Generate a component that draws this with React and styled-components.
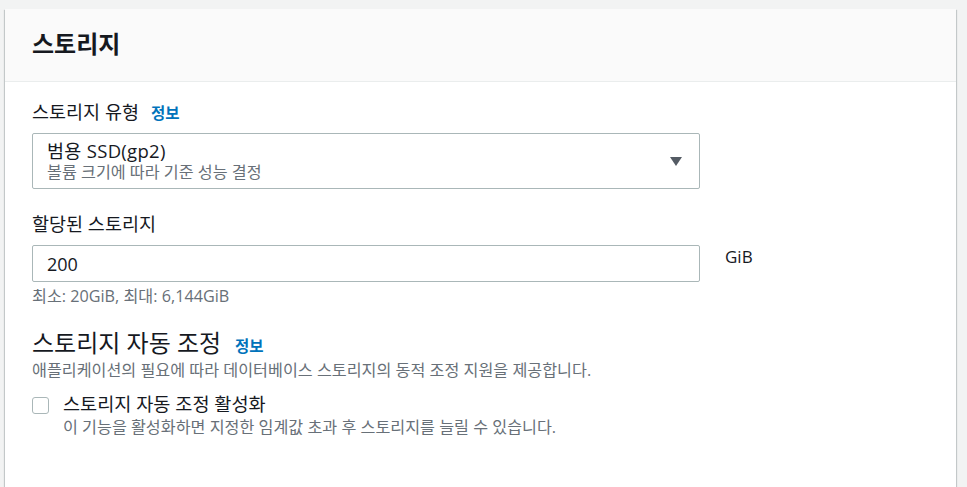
import styled, { createGlobalStyle } from "styled-components"

const GlobalStyle = createGlobalStyle`
    html, body {
        margin: 0;
        padding: 0;
        background: #f2f3f3;
    }
    body {
        font-family: "Open Sans", "Noto Sans CJK KR", sans-serif;
        color: #16191f;
    }
`

const Page = styled.div`
    padding: 9px 0 0 5px;
    width: 951px;
`

const Card = styled.section`
    background: #fff;
    box-shadow: 0 1px 1px 0 rgba(0, 28, 36, 0.3), 1px 1px 1px 0 rgba(0, 28, 36, 0.15), -1px 1px 1px 0 rgba(0, 28, 36, 0.15);
`

const Header = styled.header`
    display: flex;
    align-items: center;
    height: 72px;
    padding: 0 27px;
    background: #fafafa;
    border-bottom: 1px solid #eaeded;
`

const Title = styled.h2`
    margin: 0;
    margin-top: -3px;
    font-size: 24px;
    font-weight: 700;
    line-height: 30px;
`

const Body = styled.div`
    display: flex;
    flex-direction: column;
    padding: 18px 27px 51px;
`

const Field = styled.div`
    display: flex;
    flex-direction: column;
    margin-top: ${p => p.$top || 0}px;
`

const Label = styled.label`
    display: flex;
    align-items: baseline;
    gap: 12px;
    font-size: 18.5px;
    line-height: 24px;
    margin-bottom: ${p => p.$gap || 8}px;
`

const InfoLink = styled.a`
    color: #0073bb;
    font-size: 15.5px;
    font-weight: 700;
    text-decoration: none;
`

const Select = styled.div`
    display: flex;
    align-items: center;
    justify-content: space-between;
    box-sizing: border-box;
    width: 668px;
    height: 56px;
    padding: 0 17px 0 14px;
    border: 1px solid #aab7b8;
    border-radius: 2px;
`

const SelectText = styled.div`
    display: flex;
    flex-direction: column;
`

const Primary = styled.span`
    font-size: 18.5px;
    line-height: 22px;
    letter-spacing: 0.3px;
`

const Secondary = styled.span`
    font-size: 16.2px;
    line-height: 20px;
    color: #687078;
`

const InputRow = styled.div`
    display: flex;
    align-items: flex-start;
    gap: 25px;
`

const Input = styled.div`
    box-sizing: border-box;
    width: 668px;
    height: 37px;
    display: flex;
    align-items: center;
    padding: 0 14px;
    border: 1px solid #aab7b8;
    border-radius: 2px;
    font-size: 18px;
`

const Unit = styled.span`
    font-size: 17px;
    line-height: 24px;
`

const Hint = styled.span`
    font-size: 16.2px;
    line-height: ${p => p.$lh || 20}px;
    color: #687078;
    margin-top: ${p => p.$top || 0}px;
`

const Heading = styled.h3`
    display: flex;
    align-items: baseline;
    gap: 14px;
    margin: 23px 0 0;
    font-size: 24px;
    font-weight: 400;
    line-height: 28px;
`

const CheckRow = styled.div`
    display: flex;
    align-items: flex-start;
    gap: 14px;
    margin-top: 12px;
`

const Box = styled.span`
    flex: none;
    box-sizing: border-box;
    width: 17px;
    height: 17px;
    margin-top: 5px;
    border: 1px solid #aab7b8;
    border-radius: 3px;
    background: #fff;
`

const CheckText = styled.div`
    display: flex;
    flex-direction: column;
`

const CheckLabel = styled.span`
    font-size: 18.6px;
    line-height: 24px;
`

function Caret() {
    return (
        <svg width="12" height="9" viewBox="0 0 12 9">
            <path d="M0 0h12L6 9z" fill="#545b64" />
        </svg>
    )
}

export default function App() {
    return (
        <>
            <GlobalStyle />
            <Page>
                <Card>
                    <Header>
                        <Title>스토리지</Title>
                    </Header>
                    <Body>
                        <Field>
                            <Label>
                                스토리지 유형 <InfoLink href="#">정보</InfoLink>
                            </Label>
                            <Select>
                                <SelectText>
                                    <Primary>범용 SSD(gp2)</Primary>
                                    <Secondary>볼륨 크기에 따라 기준 성능 결정</Secondary>
                                </SelectText>
                                <Caret />
                            </Select>
                        </Field>
                        <Field $top={23}>
                            <Label $gap={9}>할당된 스토리지</Label>
                            <InputRow>
                                <Input>200</Input>
                                <Unit>GiB</Unit>
                            </InputRow>
                            <Hint $top={4}>최소: 20GiB, 최대: 6,144GiB</Hint>
                        </Field>
                        <Heading>
                            스토리지 자동 조정 <InfoLink href="#">정보</InfoLink>
                        </Heading>
                        <Hint>애플리케이션의 필요에 따라 데이터베이스 스토리지의 동적 조정 지원을 제공합니다.</Hint>
                        <CheckRow>
                            <Box />
                            <CheckText>
                                <CheckLabel>스토리지 자동 조정 활성화</CheckLabel>
                                <Hint $top={2} $lh={19}>이 기능을 활성화하면 지정한 임계값 초과 후 스토리지를 늘릴 수 있습니다.</Hint>
                            </CheckText>
                        </CheckRow>
                    </Body>
                </Card>
            </Page>
        </>
    )
}
